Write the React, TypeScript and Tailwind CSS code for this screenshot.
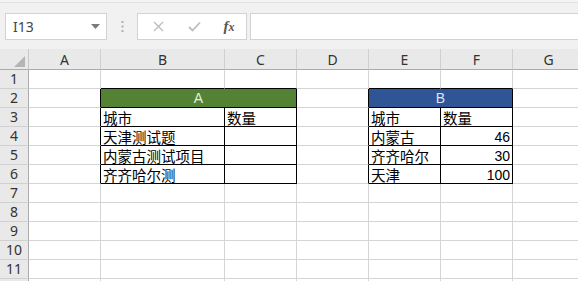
import React from "react";

type Cell = { text?: string; kind?: "cjk" | "num" | "headA" | "headB" };

const CJK = { fontFamily: '"Noto Sans CJK SC", "Noto Sans", sans-serif' };

const data: Record<string, Cell> = {
  B2: { text: "A", kind: "headA" },
  B3: { text: "城市", kind: "cjk" },
  C3: { text: "数量", kind: "cjk" },
  B4: { text: "天津测试题", kind: "cjk" },
  B5: { text: "内蒙古测试项目", kind: "cjk" },
  B6: { text: "齐齐哈尔测", kind: "cjk" },
  E2: { text: "B", kind: "headB" },
  E3: { text: "城市", kind: "cjk" },
  F3: { text: "数量", kind: "cjk" },
  E4: { text: "内蒙古", kind: "cjk" },
  F4: { text: "46", kind: "num" },
  E5: { text: "齐齐哈尔", kind: "cjk" },
  F5: { text: "30", kind: "num" },
  E6: { text: "天津", kind: "cjk" },
  F6: { text: "100", kind: "num" },
};

const COLS = ["A", "B", "C", "D", "E", "F", "G"];
const ROWS = [1, 2, 3, 4, 5, 6, 7, 8, 9, 10, 11, 12];

function inTable(c: string, r: number) {
  return r >= 2 && r <= 6 && (c === "B" || c === "C" || c === "E" || c === "F");
}

function SheetCell({ c, r }: { c: string; r: number }) {
  const key = c + r;
  const cell = data[key];
  const inside = inTable(c, r);
  const blackRight =
    inside || (r >= 2 && r <= 6 && (c === "A" || c === "D"));
  const blackBottom =
    inside || (r === 1 && (c === "B" || c === "C" || c === "E" || c === "F"));
  const rightCls = blackRight ? "border-r-black" : "border-r-[#d4d4d4]";
  const bottomCls = blackBottom ? "border-b-black" : "border-b-[#d4d4d4]";
  const span = key === "B2" || key === "E2" ? "col-span-2" : "";
  let bg = "bg-white";
  let content: React.ReactNode = null;
  let align = "justify-start pl-[2px]";
  if (cell) {
    if (cell.kind === "headA" || cell.kind === "headB") {
      bg = cell.kind === "headA" ? "bg-[#548235]" : "bg-[#2f5597]";
      align = "justify-center";
      content = (
        <span
          className={
            "text-[14px] leading-[16px] pb-[1px] " +
            (cell.kind === "headA" ? "text-[#e2efda]" : "text-[#dae3f3]")
          }
          style={{ fontFamily: '"Liberation Sans", Arial, sans-serif' }}
        >
          {cell.text}
        </span>
      );
    } else if (cell.kind === "num") {
      align = "justify-end pr-[2px]";
      content = (
        <span
          className="text-[14px] leading-[16px] text-black"
          style={{ fontFamily: '"Liberation Sans", Arial, sans-serif' }}
        >
          {cell.text}
        </span>
      );
    } else {
      content = (
        <span
          className="text-[14.5px] leading-[16px] text-black whitespace-nowrap"
          style={CJK}
        >
          {cell.text}
        </span>
      );
    }
  }
  return (
    <div
      className={`flex items-end overflow-visible border-r border-b ${rightCls} ${bottomCls} ${bg} ${span} ${align}`}
    >
      {content}
    </div>
  );
}

export default function App() {
  const headerFont = { fontFamily: '"Noto Sans", "Liberation Sans", sans-serif' };
  return (
    <div className="w-[578px] h-[281px] overflow-hidden bg-white relative">
      {/* Toolbar / formula bar */}
      <div className="h-[49px] bg-[#f1f1f1] flex flex-col">
        <div className="h-[3px] border-b border-b-[#e2e2e2] bg-[#f4f4f4]" />
        <div className="flex items-start pt-[10px] pl-[5px]">
          <div className="w-[102px] h-[27px] bg-white border border-[#d2d2d2] flex items-center justify-between pl-[7px] pr-[6px]">
            <span className="text-[14px] text-[#444]" style={headerFont}>
              I13
            </span>
            <svg width="9" height="5" viewBox="0 0 9 5">
              <path d="M0 0 L9 0 L4.5 5 Z" fill="#7a7a7a" />
            </svg>
          </div>
          <div className="w-[30px] h-[27px] flex items-center justify-center">
            <svg width="3" height="11" viewBox="0 0 3 11">
              <rect x="0.5" y="0" width="2" height="2" fill="#b0b0b0" />
              <rect x="0.5" y="4.5" width="2" height="2" fill="#b0b0b0" />
              <rect x="0.5" y="9" width="2" height="2" fill="#b0b0b0" />
            </svg>
          </div>
          <div className="w-[110px] h-[27px] bg-white border border-[#d2d2d2] flex items-center">
            <div className="w-[38px] flex justify-center pl-[2px]">
              <svg width="11" height="11" viewBox="0 0 11 11">
                <path d="M1 1 L10 10 M10 1 L1 10" stroke="#bdbdbd" strokeWidth="1.4" />
              </svg>
            </div>
            <div className="w-[36px] flex justify-center">
              <svg width="13" height="11" viewBox="0 0 13 11">
                <path d="M1 6 L4.5 9.5 L12 1.5" stroke="#bdbdbd" strokeWidth="1.8" fill="none" />
              </svg>
            </div>
            <div className="flex-1 flex justify-center">
              <span
                className="text-[15px] italic font-bold text-[#555] leading-none"
                style={{ fontFamily: '"Liberation Serif", "Times New Roman", serif' }}
              >
                f<span className="text-[12px]">x</span>
              </span>
            </div>
          </div>
          <div className="ml-[3px] flex-1 h-[27px] bg-white border border-[#d2d2d2] border-r-0" />
        </div>
      </div>

      {/* Sheet grid */}
      <div className="grid grid-cols-[29px_72px_124px_72px_72px_72px_72px_72px] grid-rows-[21px_repeat(12,19px)]">
        {/* corner */}
        <div className="bg-[#e9e9e9] border-r border-b border-r-[#c8c8c8] border-b-[#ababab] flex items-end justify-end pr-[3px] pb-[2px]">
          <svg width="11" height="11" viewBox="0 0 11 11">
            <path d="M11 0 L11 11 L0 11 Z" fill="#b5b5b5" />
          </svg>
        </div>
        {COLS.map((c) => (
          <div
            key={c}
            className="bg-[#e9e9e9] border-r border-b border-r-[#d0d0d0] border-b-[#ababab] flex items-center justify-center text-[14px] text-[#333] leading-none pt-[1px]"
            style={headerFont}
          >
            {c}
          </div>
        ))}
        {ROWS.map((r) => (
          <React.Fragment key={r}>
            <div
              className="bg-[#e9e9e9] border-r border-b border-r-[#ababab] border-b-[#d0d0d0] flex items-center justify-center text-[14px] text-[#333] leading-none"
              style={headerFont}
            >
              {r <= 11 ? r : ""}
            </div>
            {COLS.filter((c) => !(r === 2 && (c === "C" || c === "F"))).map((c) => (
              <SheetCell key={c + r} c={c} r={r} />
            ))}
          </React.Fragment>
        ))}
      </div>
    </div>
  );
}
